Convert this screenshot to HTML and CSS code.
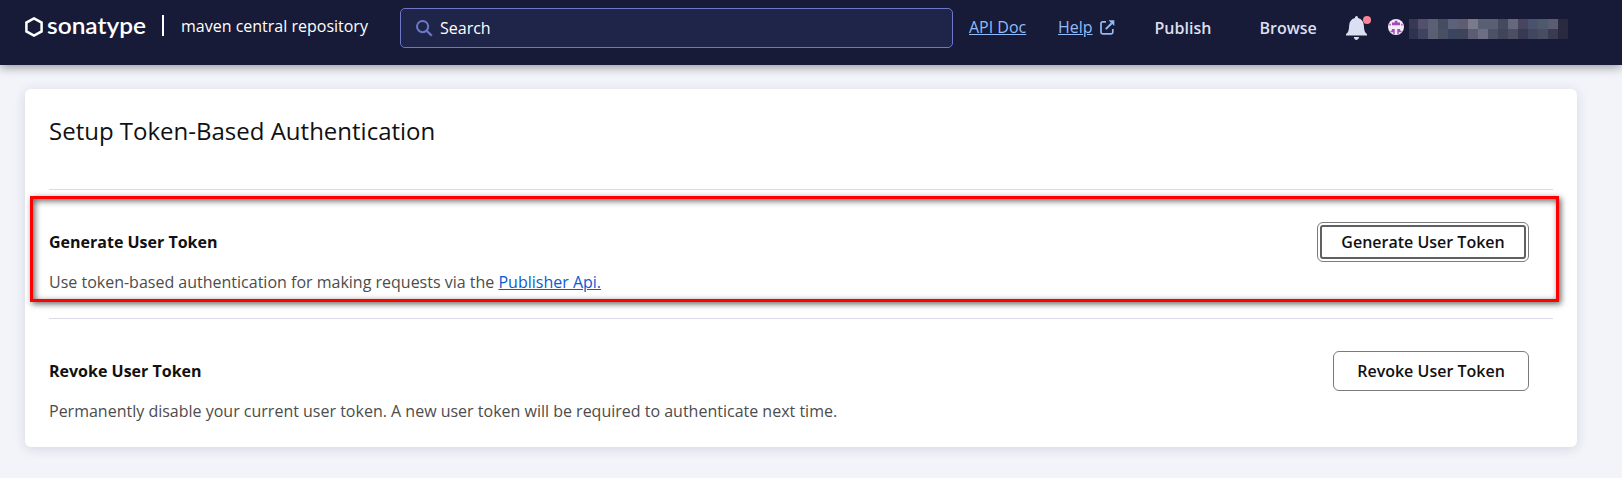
FILE: index.html
```html
<!DOCTYPE html>
<html lang="en">
<head>
<meta charset="utf-8">
<title>Maven Central Repository</title>
<link rel="stylesheet" href="styles.css">
</head>
<body>
<header class="topbar">
  <a class="brand">
    <svg class="brand-mark" width="18" height="20" viewBox="0 0 18 20"><path d="M9 1.4 16.6 5.6V14.4L9 18.6 1.4 14.4V5.6Z" fill="none" stroke="#fff" stroke-width="2.5"/></svg>
    <svg class="brand-name" width="100" height="30" viewBox="0 0 100 30"><text x="0" y="20.5" textLength="99" lengthAdjust="spacingAndGlyphs">sonatype</text></svg>
  </a>
  <span class="divider"></span>
  <span class="product">maven central repository</span>
  <div class="search">
    <svg width="17" height="17" viewBox="0 0 17 17" fill="none" stroke="#6f78c8" stroke-width="2"><circle cx="6.6" cy="6.6" r="5.6"/><path d="M10.7 10.7 15.8 15.8" stroke-width="2.3"/></svg>
    <span>Search</span>
  </div>
  <a class="link api">API Doc</a>
  <a class="link help">Help</a>
  <svg class="external" width="15" height="15" viewBox="0 0 15 15" fill="none" stroke="#8fbcf9" stroke-width="1.7"><path d="M6 1.9H2.6Q1 1.9 1 3.5V12.3Q1 13.9 2.6 13.9H11.2Q12.8 13.9 12.8 12.3V9"/><path d="M5.8 9.1 11.7 3.2" stroke-width="2"/><path d="M8.5.3H14.3V6.1Z" fill="#8fbcf9" stroke="none"/></svg>
  <a class="nav publish">Publish</a>
  <a class="nav browse">Browse</a>
  <div class="bell">
    <svg width="21" height="24" viewBox="0 0 21 24" fill="#dcdff2"><path d="M10.5 0Q12 0 12.1 2Q17.6 3.3 17.9 10Q18 15 19.7 16.9Q21 17.6 21 18.3V19.4H0V18.3Q0 17.6 1.3 16.9Q3 15 3.1 10Q3.4 3.3 8.9 2Q9 0 10.5 0Z"/><path d="M7.8 21H13.2Q12.6 24 10.5 24Q8.4 24 7.8 21Z"/></svg>
    <span class="dot"></span>
  </div>
  <svg class="avatar" width="16" height="16" viewBox="0 0 16 16"><circle cx="8" cy="8" r="8" fill="#f1eef4"/><path fill="#a944c4" d="M6.8 1.8H9.4V3.6H12V6.2H4V3.6H6.8ZM1.4 4.8H2.8V6.4H1.4ZM13.2 4.8H14.6V6.4H13.2ZM3.9 10H6.7V15H5.3V13.2H2.5V11.8H3.9ZM9.3 10H12.1V11.8H13.5V13.2H10.7V15H9.3Z"/></svg>
  <svg class="username" width="159" height="20" viewBox="0 0 159 20" shape-rendering="crispEdges">
    <path fill="#363854" d="M0 0h9v10H0z"/><path fill="#52506a" d="M9 0h10v10H9z"/><path fill="#5b6074" d="M19 0h10v10H19z"/><path fill="#464c61" d="M29 0h10v10H29z"/><path fill="#5a6379" d="M39 0h10v10H39z"/><path fill="#5e5d71" d="M49 0h10v10H49z"/><path fill="#7a7a8a" d="M59 0h10v10H59z"/><path fill="#5a6074" d="M69 0h20v10H69z"/><path fill="#444a60" d="M89 0h10v10H89z"/><path fill="#67687d" d="M99 0h10v10H99z"/><path fill="#484560" d="M109 0h10v10H109z"/><path fill="#4b526d" d="M119 0h10v10H119z"/><path fill="#4e596b" d="M129 0h10v10H129z"/><path fill="#5b5b72" d="M139 0h10v10H139z"/><path fill="#292a40" d="M149 0h10v20H149z"/>
    <path fill="#30334f" d="M0 10h9v10H0z"/><path fill="#404260" d="M9 10h10v10H9z"/><path fill="#5b5f74" d="M19 10h10v10H19z"/><path fill="#4a5064" d="M29 10h10v10H29z"/><path fill="#3c4560" d="M39 10h10v10H39z"/><path fill="#3e455a" d="M49 10h10v10H49z"/><path fill="#5d5c74" d="M59 10h10v10H59z"/><path fill="#6b6e85" d="M69 10h10v10H69z"/><path fill="#4d5165" d="M79 10h10v10H79z"/><path fill="#3f465b" d="M89 10h10v10H89z"/><path fill="#4e4e63" d="M99 10h10v10H99z"/><path fill="#383953" d="M109 10h10v10H109z"/><path fill="#40475f" d="M119 10h10v10H119z"/><path fill="#484d62" d="M129 10h10v10H129z"/><path fill="#393b55" d="M139 10h10v10H139z"/>
  </svg>
</header>
<main class="card">
  <h1>Setup Token-Based Authentication</h1>
  <section class="row">
    <div>
      <h2>Generate User Token</h2>
      <p>Use token-based authentication for making requests via the <a class="doc-link">Publisher Api.</a></p>
    </div>
    <button class="btn generate">Generate User Token</button>
    <span class="highlight"></span>
  </section>
  <section class="row">
    <div>
      <h2>Revoke User Token</h2>
      <p>Permanently disable your current user token. A new user token will be required to authenticate next time.</p>
    </div>
    <button class="btn revoke">Revoke User Token</button>
  </section>
</main>
</body>
</html>
```
FILE: styles.css
```css
* { box-sizing: border-box; }
body {
  margin: 0;
  height: 478px;
  overflow: hidden;
  background: #f3f4fa;
  font: 16px/24px "Open Sans", "Noto Sans", sans-serif;
  color: #111;
}
.topbar {
  display: flex;
  align-items: flex-start;
  height: 65px;
  padding-left: 25px;
  background: #171b37;
  box-shadow: 0 2px 10px rgba(0, 0, 0, .4);
  color: #fff;
  white-space: nowrap;
}
.topbar > * { flex: none; }
.brand { display: flex; width: 137px; }
.brand-mark { margin-top: 17px; }
.brand-name { margin: 13px 0 0 4px; overflow: visible; }
.brand-name text { font: 600 23px Lato, sans-serif; fill: #fff; }
.divider { width: 2px; height: 21px; margin-top: 15px; background: #fff; }
.product { width: 219px; margin-top: 14px; padding-left: 17px; }
.search {
  display: flex;
  align-items: center;
  gap: 7px;
  width: 553px;
  height: 40px;
  margin: 8px 0 0 17px;
  padding-left: 15px;
  background: #1e2549;
  border: 1px solid #6f78c8;
  border-radius: 5px;
}
.link { margin-top: 15px; color: #8fbcf9; text-decoration: underline; }
.api { width: 89px; margin-left: 16px; }
.help { width: 42px; }
.external { margin-top: 20px; }
.nav { margin-top: 16px; font-weight: 600; color: #dcdff2; }
.publish { width: 105px; margin-left: 39.5px; }
.browse { width: 86.5px; }
.bell { position: relative; width: 42px; height: 24px; margin-top: 16px; }
.dot {
  position: absolute;
  left: 17px;
  top: 0;
  width: 8px;
  height: 8px;
  border-radius: 50%;
  background: #ff8397;
}
.avatar { margin-top: 19px; }
.username { margin: 19px 0 0 5px; }
.card {
  width: 1552px;
  height: 358px;
  margin: 24px 0 0 25px;
  padding: 24px;
  background: #fff;
  border-radius: 6px;
  box-shadow: 0 2px 12px rgba(30, 35, 70, .14);
}
h1 { margin: 0; height: 76px; font-size: 24px; line-height: 36px; font-weight: 400; }
h2 { margin: 0; font-size: 16px; line-height: 24px; font-weight: 700; }
p { margin: 16px 0 0; color: #4c4c4c; }
.row {
  position: relative;
  display: flex;
  justify-content: space-between;
  align-items: flex-start;
  height: 129px;
  padding: 40px 24px 0 0;
  border-top: 1px solid #d9daea;
}
.btn {
  height: 40px;
  margin-top: -8px;
  padding: 0;
  border: 1px solid #7b7b7b;
  border-radius: 6px;
  background: #fff;
  font: 600 16px/24px "Open Sans", "Noto Sans", sans-serif;
  color: #111;
}
.generate { width: 212px; outline: 2px solid #5f6062; outline-offset: -5px; }
.revoke { width: 196px; }
.highlight {
  position: absolute;
  left: -19px;
  top: 6px;
  width: 1529px;
  height: 106px;
  border: 3px solid #f00;
  box-shadow: 2px 2px 6px rgba(0, 0, 0, .6), inset 2px 2px 6px rgba(0, 0, 0, .6);
}
.doc-link { color: #0b5bd3; text-decoration: underline; }
```
